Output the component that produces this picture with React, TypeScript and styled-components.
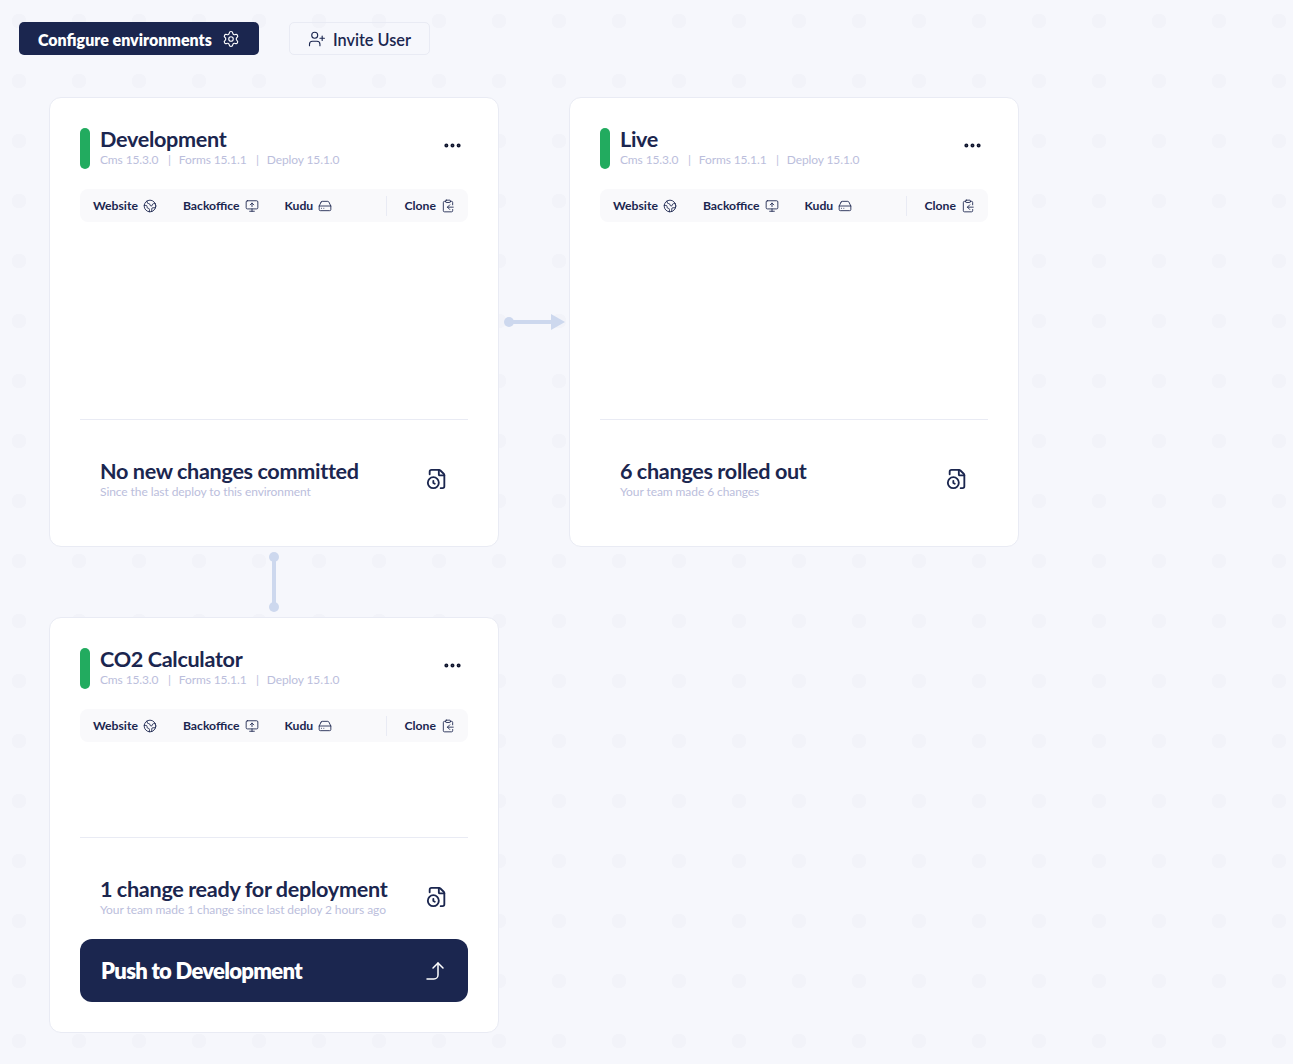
import React from "react"
import styled, { createGlobalStyle } from "styled-components"
import {
  ClipboardCopy,
  CornerRightUp,
  Earth,
  Ellipsis,
  FileClock,
  HardDrive,
  MonitorUp,
  Settings,
  UserPlus,
} from "lucide-react"

const navy = "#1b264f"
const muted = "#bbbedc"
const line = "#e9ebf4"
const connector = "#cdd8ee"

const GlobalStyle = createGlobalStyle`
  html, body {
    margin: 0;
    padding: 0;
  }
  body {
    height: 1064px;
    overflow: hidden;
    font-family: "Lato", "Liberation Sans", sans-serif;
    color: ${navy};
    background-color: #f6f7fc;
    background-image: radial-gradient(circle at 19px 21px, #f2f3f9 7px, transparent 7.5px);
    background-size: 60px 60px;
    background-position: 0 0;
  }
`

const Page = styled.div`
  padding: 22px 0 0 19px;
`

const Toolbar = styled.div`
  display: flex;
  gap: 30px;
  height: 33px;
`

const PrimaryButton = styled.button`
  display: flex;
  align-items: center;
  justify-content: space-between;
  box-sizing: border-box;
  width: 240px;
  padding: 1px 19px 0;
  border: 0;
  border-radius: 5px;
  background: ${navy};
  color: #fff;
  font: 800 16px "Lato", sans-serif;
`

const GhostButton = styled.button`
  display: flex;
  align-items: center;
  gap: 7px;
  box-sizing: border-box;
  width: 141px;
  padding: 1px 18px 0;
  border: 1px solid ${line};
  border-radius: 5px;
  background: transparent;
  color: ${navy};
  font: 600 16.3px "Lato", sans-serif;
  white-space: nowrap;
`

const Board = styled.div`
  display: grid;
  grid-template-columns: 450px 70px 450px;
  grid-template-rows: 450px 70px auto;
  margin: 42px 0 0 30px;
`

const Card = styled.section`
  display: flex;
  flex-direction: column;
  box-sizing: border-box;
  padding: 30px;
  border: 1px solid ${line};
  border-radius: 12px;
  background: #fff;
`

const Header = styled.header`
  display: flex;
  align-items: flex-start;
  gap: 10px;
  height: 41px;
  margin-bottom: 20px;
`

const StatusBar = styled.span`
  flex: none;
  width: 10px;
  height: 41px;
  border-radius: 5px;
  background: #22ab5f;
`

const HeaderText = styled.div`
  flex: 1;
`

const Title = styled.h2`
  margin: 0 0 1px;
  font-size: 21.6px;
  font-weight: 700;
  line-height: 23px;
  letter-spacing: -0.3px;
  word-spacing: -0.3px;
`

const Versions = styled.div`
  display: flex;
  color: ${muted};
  font-size: 12px;
  line-height: 16px;
  letter-spacing: -0.12px;
`

const Version = styled.span`
  & + &::before {
    content: "|";
    margin: 0 8px 0 9.5px;
  }
`

const MoreButton = styled.span`
  display: flex;
  margin: 7px 5px 0 0;
  color: #10162f;
`

const Links = styled.nav`
  display: flex;
  align-items: center;
  height: 33px;
  padding: 0 13px;
  border-radius: 8px;
  background: #f9f9fb;
`

const LinkItem = styled.span<{ $gap?: number }>`
  display: flex;
  align-items: center;
  gap: 5px;
  margin-right: ${(p) => p.$gap ?? 0}px;
  font-size: 12.2px;
  font-weight: 700;
  line-height: 16px;

  svg {
    margin-top: 1px;
  }
`

const LinkDivider = styled.span`
  width: 1px;
  height: 20px;
  margin: 0 18px 0 auto;
  background: ${line};
`

const Body = styled.div`
  flex: 1;
  min-height: 95px;
`

const Summary = styled.div<{ $last?: boolean }>`
  display: flex;
  align-items: center;
  justify-content: space-between;
  height: 40px;
  padding: 40px 20px ${(p) => (p.$last ? 21 : 16)}px;
  border-top: 1px solid ${line};
`

const SummaryTitle = styled.div`
  margin-bottom: 1px;
  font-size: 21.6px;
  font-weight: 700;
  line-height: 23px;
  letter-spacing: -0.3px;
  word-spacing: -0.3px;
`

const SummaryNote = styled.div`
  color: ${muted};
  font-size: 12px;
  line-height: 16px;
  letter-spacing: -0.08px;
`

const FileIcon = styled(FileClock)`
  flex: none;
  margin-bottom: 3px;
`

const PushButton = styled.button`
  display: flex;
  align-items: center;
  justify-content: space-between;
  height: 63px;
  padding: 0 21px;
  border: 0;
  border-radius: 12px;
  background: ${navy};
  color: #fff;
  font: 800 22px "Lato", sans-serif;
  letter-spacing: -0.7px;
`

const ArrowCell = styled.div`
  display: flex;
  align-items: center;
  justify-content: center;
`

const LiveCard = styled(Card)`
  grid-column: 3;
`

const LowerConnector = styled.div`
  grid-column: 1;
  grid-row: 2;
  display: flex;
  justify-content: center;
  align-items: center;
`

const LowerCard = styled(Card)`
  grid-column: 1;
  grid-row: 3;
`

type EnvProps = {
  name: string
  summary: string
  note: string
  children?: React.ReactNode
}

const EnvContent = ({ name, summary, note, children }: EnvProps) => (
  <>
    <Header>
      <StatusBar />
      <HeaderText>
        <Title>{name}</Title>
        <Versions>
          <Version>Cms 15.3.0</Version>
          <Version>Forms 15.1.1</Version>
          <Version>Deploy 15.1.0</Version>
        </Versions>
      </HeaderText>
      <MoreButton><Ellipsis size={21} strokeWidth={2.6} /></MoreButton>
    </Header>
    <Links>
      <LinkItem $gap={26}>Website <Earth size={14} strokeWidth={1.5} /></LinkItem>
      <LinkItem $gap={26}>Backoffice <MonitorUp size={14} strokeWidth={1.5} /></LinkItem>
      <LinkItem>Kudu <HardDrive size={14} strokeWidth={1.5} /></LinkItem>
      <LinkDivider />
      <LinkItem>Clone <ClipboardCopy size={14} strokeWidth={1.5} /></LinkItem>
    </Links>
    <Body />
    <Summary $last={!!children}>
      <div>
        <SummaryTitle>{summary}</SummaryTitle>
        <SummaryNote>{note}</SummaryNote>
      </div>
      <FileIcon size={22} strokeWidth={2} />
    </Summary>
    {children}
  </>
)

export default function App() {
  return (
    <Page>
      <GlobalStyle />
      <Toolbar>
        <PrimaryButton>Configure environments <Settings size={18} strokeWidth={1.5} /></PrimaryButton>
        <GhostButton><UserPlus size={18} strokeWidth={1.5} /> Invite User</GhostButton>
      </Toolbar>
      <Board>
        <Card>
          <EnvContent
            name="Development"
            summary="No new changes committed"
            note="Since the last deploy to this environment"
          />
        </Card>
        <ArrowCell>
          <svg width="61" height="16" viewBox="0 0 61 16">
            <circle cx="5" cy="8" r="5" fill={connector} />
            <path d="M5 6h42v4H5z" fill={connector} />
            <path d="M47 0l14 8-14 8z" fill={connector} />
          </svg>
        </ArrowCell>
        <LiveCard>
          <EnvContent
            name="Live"
            summary="6 changes rolled out"
            note="Your team made 6 changes"
          />
        </LiveCard>
        <LowerConnector>
          <svg width="10" height="60" viewBox="0 0 10 60">
            <circle cx="5" cy="5" r="5" fill={connector} />
            <path d="M3 5h4v50H3z" fill={connector} />
            <circle cx="5" cy="55" r="5" fill={connector} />
          </svg>
        </LowerConnector>
        <LowerCard>
          <EnvContent
            name="CO2 Calculator"
            summary="1 change ready for deployment"
            note="Your team made 1 change since last deploy 2 hours ago"
          >
            <PushButton>Push to Development <CornerRightUp size={24} strokeWidth={1.5} /></PushButton>
          </EnvContent>
        </LowerCard>
      </Board>
    </Page>
  )
}
